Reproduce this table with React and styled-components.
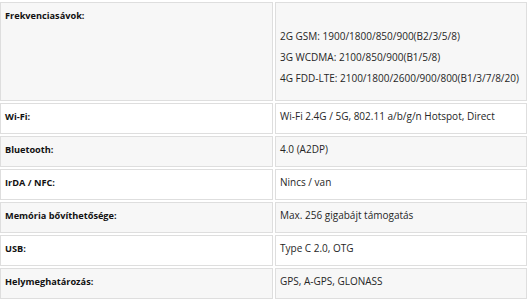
import React from "react";
import styled, { createGlobalStyle } from "styled-components";

const GlobalStyle = createGlobalStyle`
  body {
    margin: 0;
    background: #ffffff;
  }
`;

const Page = styled.div`
  width: 529px;
  padding-top: 2px;
  box-sizing: border-box;
  font-family: "Open Sans", "Noto Sans", sans-serif;
  font-size: 10px;
  color: #262626;
`;

const SpecTable = styled.div`
  display: grid;
  grid-template-columns: 273px 252px;
  gap: 2px;
`;

const Cell = styled.div`
  background: ${(p) => (p.$shaded ? "#f7f7f7" : "#ffffff")};
  border: 1px solid #dedede;
  padding: 2px 4px ${(p) => (p.$tall ? "11px" : "6px")};
  line-height: 21px;
`;

const Label = styled(Cell)`
  font-size: 9.2px;
  font-weight: 700;
  color: #111111;
`;

const Line = styled.p`
  margin: 0;
  min-height: 21px;
  white-space: nowrap;
`;

const specs = [
  {
    label: "Frekvenciasávok:",
    value: [
      "",
      "2G GSM: 1900/1800/850/900(B2/3/5/8)",
      "3G WCDMA: 2100/850/900(B1/5/8)",
      "4G FDD-LTE: 2100/1800/2600/900/800(B1/3/7/8/20)",
    ],
  },
  { label: "Wi-Fi:", value: ["Wi-Fi 2.4G / 5G, 802.11 a/b/g/n Hotspot, Direct"] },
  { label: "Bluetooth:", value: ["4.0 (A2DP)"] },
  { label: "IrDA / NFC:", value: ["Nincs / van"] },
  { label: "Memória bővíthetősége:", value: ["Max. 256 gigabájt támogatás"] },
  { label: "USB:", value: ["Type C 2.0, OTG"] },
  { label: "Helymeghatározás:", value: ["GPS, A-GPS, GLONASS"] },
];

export default function App() {
  return (
    <>
      <GlobalStyle />
      <Page>
        <SpecTable>
          {specs.map((row, i) => {
            const shaded = i % 2 === 0;
            const tall = row.value.length > 1;
            return (
              <React.Fragment key={row.label}>
                <Label $shaded={shaded}>{row.label}</Label>
                <Cell $shaded={shaded} $tall={tall}>
                  {row.value.map((text, j) => (
                    <Line key={j}>{text}</Line>
                  ))}
                </Cell>
              </React.Fragment>
            );
          })}
        </SpecTable>
      </Page>
    </>
  );
}
